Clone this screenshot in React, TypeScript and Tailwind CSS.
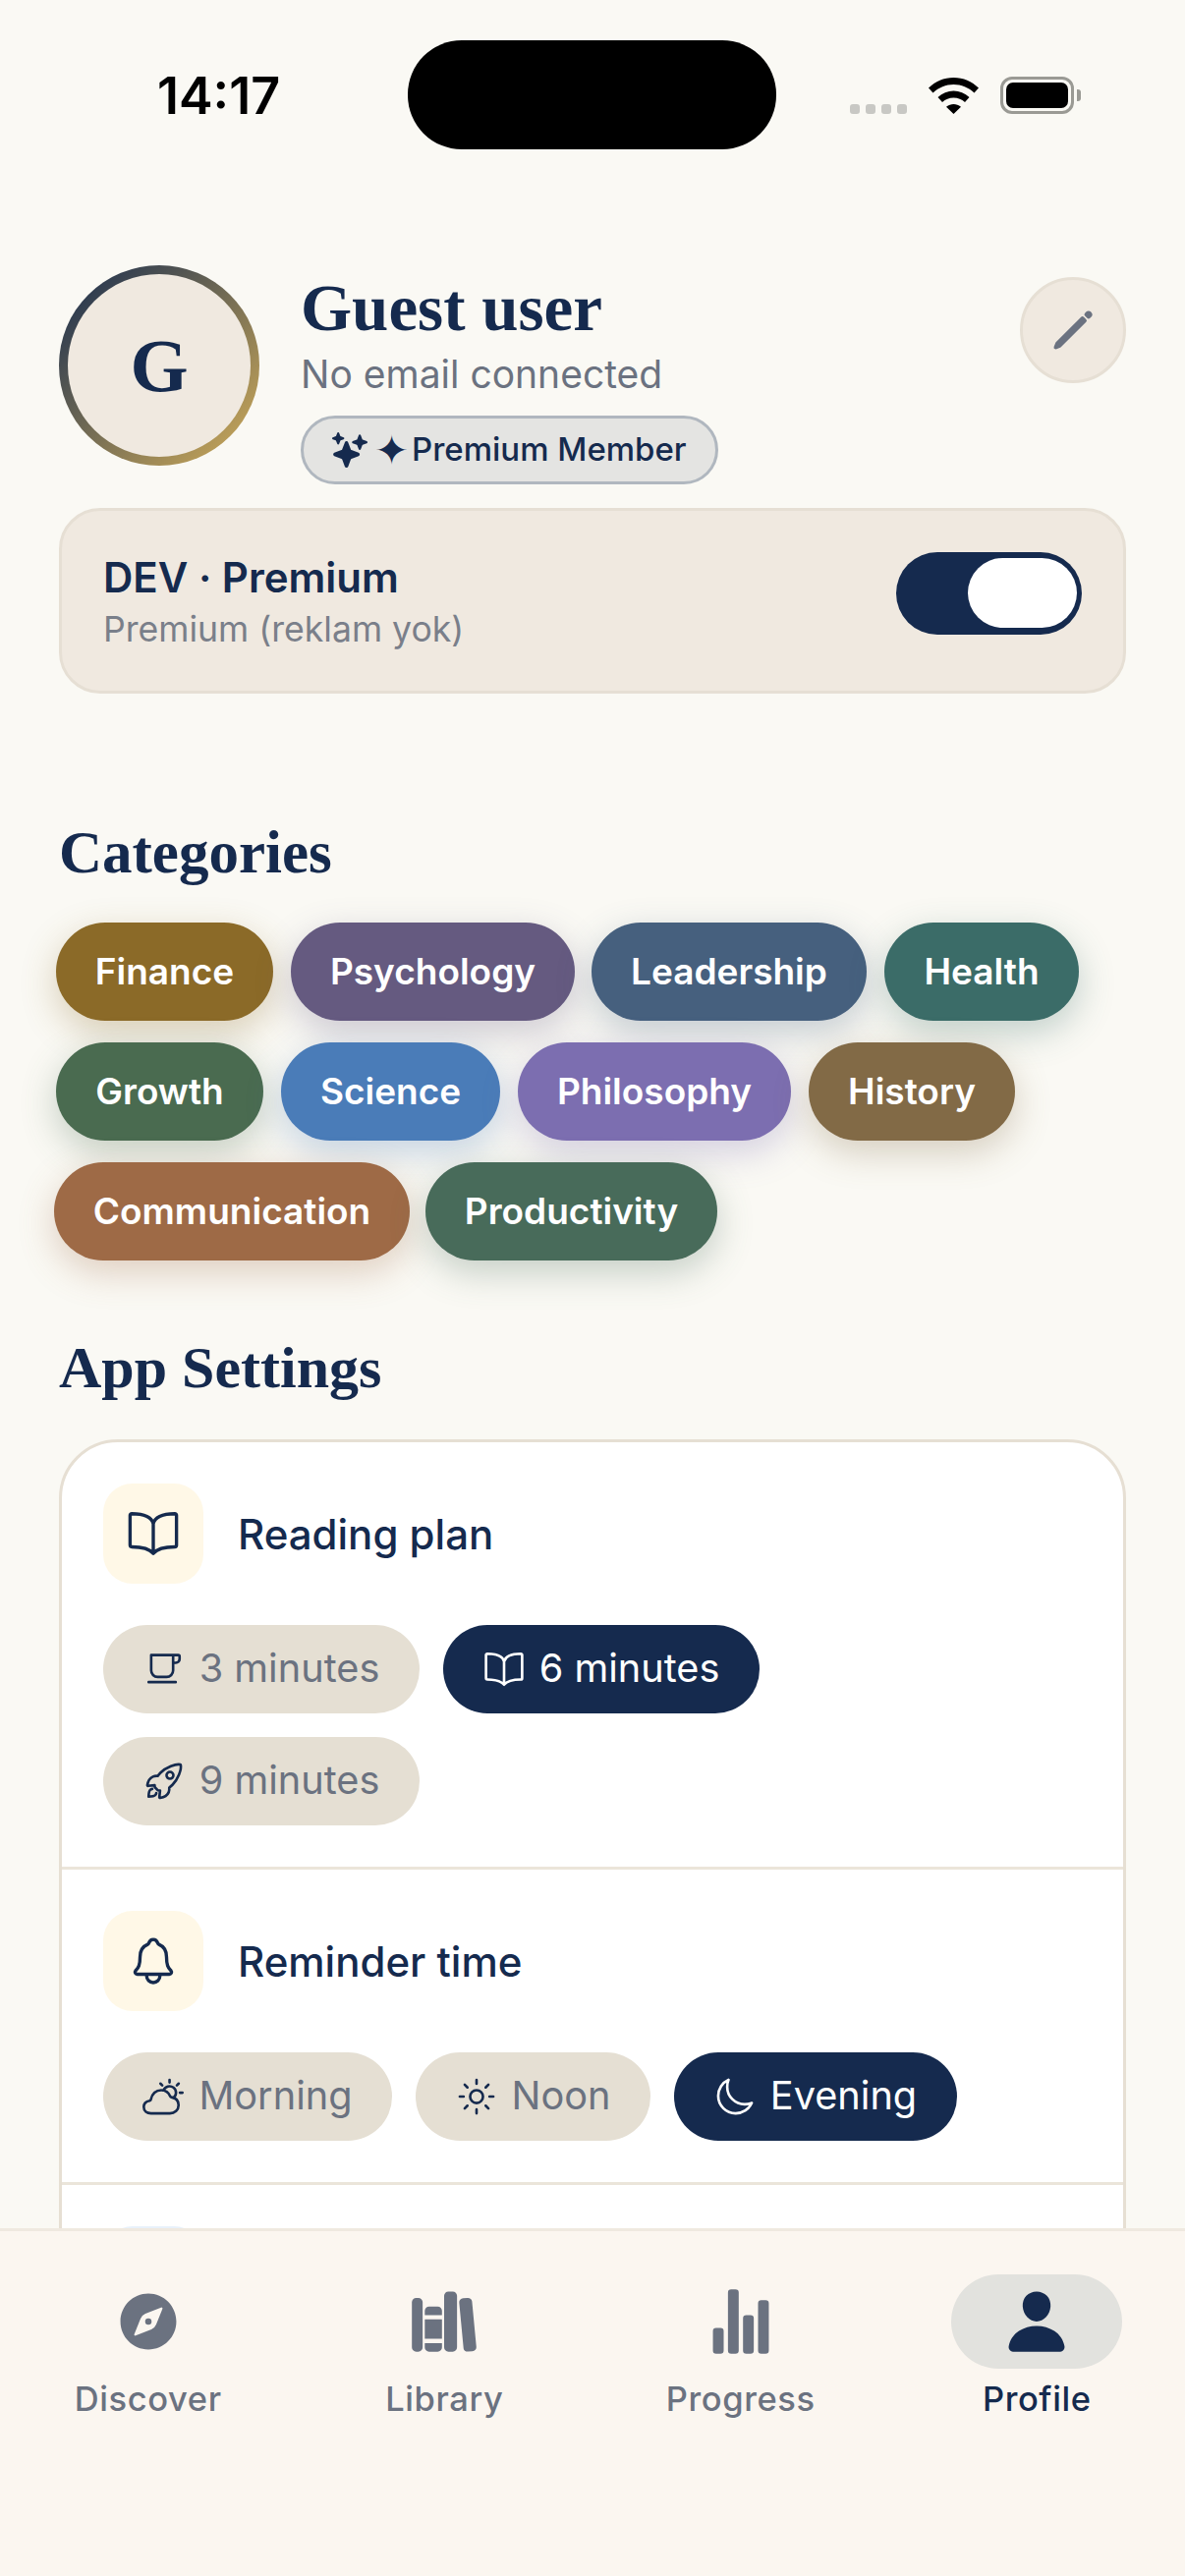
import { ReactNode } from "react"
import {
  IoBookOutline,
  IoCafeOutline,
  IoCompass,
  IoLibrary,
  IoMoonOutline,
  IoNotificationsOutline,
  IoPartlySunnyOutline,
  IoPencil,
  IoPerson,
  IoRocketOutline,
  IoSparkles,
  IoStatsChart,
  IoSunnyOutline,
} from "react-icons/io5"

const sans = "font-['Inter','Noto_Sans',sans-serif]"
const serif = "font-['Liberation_Serif','DejaVu_Serif',serif]"

const categories = [
  { label: "Finance", cls: "bg-[#8b6a28] shadow-[0_12px_36px_rgba(139,106,40,0.3)] w-[221px]" },
  { label: "Psychology", cls: "bg-[#655a80] shadow-[0_12px_36px_rgba(101,90,128,0.3)] w-[289px]" },
  { label: "Leadership", cls: "bg-[#46607e] shadow-[0_12px_36px_rgba(70,96,126,0.3)] w-[280px] -ml-[1px]" },
  { label: "Health", cls: "bg-[#3b6c68] shadow-[0_12px_36px_rgba(59,108,104,0.3)] w-[198px]" },
  { label: "Growth", cls: "bg-[#4a6b50] shadow-[0_12px_36px_rgba(74,107,80,0.3)] w-[211px]" },
  { label: "Science", cls: "bg-[#4a7cb8] shadow-[0_12px_36px_rgba(74,124,184,0.3)] w-[223px]" },
  { label: "Philosophy", cls: "bg-[#7c6eb0] shadow-[0_12px_36px_rgba(124,110,176,0.3)] w-[278px]" },
  { label: "History", cls: "bg-[#826a46] shadow-[0_12px_36px_rgba(130,106,70,0.3)] w-[210px]" },
  { label: "Communication", cls: "bg-[#9e6a46] shadow-[0_12px_36px_rgba(158,106,70,0.3)] w-[362px] -ml-[2px]" },
  { label: "Productivity", cls: "bg-[#486b5a] shadow-[0_12px_36px_rgba(72,107,90,0.3)] w-[297px] -ml-[2px]" },
]

function StatusBar() {
  return (
    <div className="flex h-[152px] shrink-0 items-start pt-[41px]">
      <span className={`${sans} ml-[160px] mt-[26px] w-[255px] text-[52px] leading-[62px] font-semibold text-black`}>
        14:17
      </span>
      <div className="h-[111px] w-[375px] rounded-[55px] bg-black" />
      <div className="ml-[75px] mt-[65px] flex gap-[6px]">
        <span className="h-[10px] w-[10px] rounded-[3px] bg-[#c8c8c4]" />
        <span className="h-[10px] w-[10px] rounded-[3px] bg-[#c8c8c4]" />
        <span className="h-[10px] w-[10px] rounded-[3px] bg-[#c8c8c4]" />
        <span className="h-[10px] w-[10px] rounded-[3px] bg-[#c8c8c4]" />
      </div>
      <svg className="ml-[22px] mt-[38px]" width="51" height="37" viewBox="0 0 51 37">
        <path d="M25.5 0C15.5 0 7 4 0 10.5L4.5 15.5C10.5 10 17.5 7 25.5 7S40.5 10 46.5 15.5L51 10.5C44 4 35.5 0 25.5 0Z" fill="#000" />
        <path d="M25.5 13.5C19.5 13.5 14 15.7 9.5 20L14 25C17.2 22 21 20.5 25.5 20.5S33.8 22 37 25L41.5 20C37 15.7 31.5 13.5 25.5 13.5Z" fill="#000" />
        <path d="M25.5 27C22.8 27 20.5 27.9 18 29.8L25.5 37L33 29.8C30.5 27.9 28.2 27 25.5 27Z" fill="#000" />
      </svg>
      <div className="ml-[22px] mt-[37px] flex items-center">
        <div className="h-[38px] w-[75px] rounded-[12px] border-[3px] border-[#9a9a94] p-[3px]">
          <div className="h-full w-full rounded-[7px] bg-black" />
        </div>
        <span className="ml-[3px] h-[12px] w-[4px] rounded-r-[3px] bg-[#9a9a94]" />
      </div>
    </div>
  )
}

function ProfileHeader() {
  return (
    <div className="flex items-start">
      <div className="h-[204px] w-[204px] shrink-0 rounded-full bg-[linear-gradient(135deg,#152a4e,#d4af5a)] p-[9px]">
        <div className={`${serif} flex h-full w-full items-center justify-center rounded-full bg-[#f0e9e0] text-[76px] leading-none font-bold text-[#152a4e]`}>
          G
        </div>
      </div>
      <div className="ml-[42px] flex flex-1 flex-col items-start">
        <div className={`${serif} text-[67px] leading-[86px] font-bold text-[#152a4e]`}>Guest user</div>
        <div className={`${sans} text-[39px] leading-[50px] text-[#6b7280]`}>No email connected</div>
        <div className={`${sans} mt-[17px] flex h-[70px] w-[425px] items-center rounded-full border-[3px] border-[#b0b7bf] bg-[#e4e4e2] pl-[29px] text-[33px] font-medium text-[#152a4e]`}>
          <IoSparkles size={36} />
          <span className="ml-[7px] flex items-center">
            <span className="text-[42px] leading-none">✦</span>
            <span className="ml-[3px]">Premium Member</span>
          </span>
        </div>
      </div>
      <div className="mt-[12px] flex h-[108px] w-[108px] shrink-0 items-center justify-center rounded-full border-[3px] border-[#e6dfd4] bg-[#f0e9e0] text-[#6b7280]">
        <IoPencil size={48} />
      </div>
    </div>
  )
}

function DevCard() {
  return (
    <div className="mt-[24px] flex h-[189px] items-center justify-between rounded-[42px] border-[3px] border-[#e6dfd4] bg-[#f0e9e0] pl-[42px] pr-[42px]">
      <div className={`${sans} pt-[3px]`}>
        <div className="text-[42px] leading-[54px] font-semibold text-[#152a4e]">DEV · Premium</div>
        <div className="mt-[2px] text-[35.6px] leading-[48px] text-[#7a7f8a]">Premium (reklam yok)</div>
      </div>
      <div className="mb-[16px] flex h-[84px] w-[189px] items-center justify-end rounded-full bg-[#152a4e] pr-[5px]">
        <div className="h-[71px] w-[111px] rounded-full bg-white" />
      </div>
    </div>
  )
}

function Chips() {
  return (
    <div className="-ml-[3px] mt-[35px] flex flex-wrap gap-x-[18px] gap-y-[22px]">
      {categories.map((c) => (
        <div
          key={c.label}
          className={`${sans} ${c.cls} flex h-[100px] items-center justify-center rounded-full text-[37px] font-semibold text-white`}
        >
          {c.label}
        </div>
      ))}
    </div>
  )
}

function Option({ icon, label, active, className }: { icon: ReactNode; label: string; active?: boolean; className: string }) {
  return (
    <div
      className={`${sans} ${className} flex h-[90px] items-center justify-center gap-[15px] rounded-full text-[39.7px] ${
        active ? "bg-[#152a4e] text-white" : "bg-[#e5dfd3] text-[#6b7280]"
      }`}
    >
      <span className={active ? "text-white" : "text-[#152a4e]"}>{icon}</span>
      {label}
    </div>
  )
}

function SettingRow({ icon, title, children }: { icon: ReactNode; title: string; children: ReactNode }) {
  return (
    <div className="border-b-[3px] border-[#ebe5da] px-[42px] py-[42px]">
      <div className="flex items-center gap-[35px]">
        <div className="flex h-[102px] w-[102px] items-center justify-center rounded-[30px] bg-[#fff8e7] text-[#152a4e]">
          {icon}
        </div>
        <span className={`${sans} text-[42px] font-medium text-[#152a4e]`}>{title}</span>
      </div>
      <div className="mt-[42px] flex flex-wrap gap-[24px]">{children}</div>
    </div>
  )
}

function Settings() {
  return (
    <div className="mt-[37px] rounded-[60px] border-[3px] border-[#e6dfd3] bg-white">
      <SettingRow icon={<IoBookOutline size={54} />} title="Reading plan">
        <Option className="w-[322px]" icon={<IoCafeOutline size={42} />} label="3 minutes" />
        <Option className="w-[322px]" icon={<IoBookOutline size={42} />} label="6 minutes" active />
        <Option className="w-[322px]" icon={<IoRocketOutline size={42} />} label="9 minutes" />
      </SettingRow>
      <SettingRow icon={<IoNotificationsOutline size={54} />} title="Reminder time">
        <Option className="w-[294px]" icon={<IoPartlySunnyOutline size={42} />} label="Morning" />
        <Option className="w-[239px]" icon={<IoSunnyOutline size={42} />} label="Noon" />
        <Option className="w-[288px]" icon={<IoMoonOutline size={42} />} label="Evening" active />
      </SettingRow>
      <div className="px-[42px] py-[42px]">
        <div className="h-[102px] w-[102px] rounded-[30px] bg-[#e8f1fa]" />
      </div>
    </div>
  )
}

function NavItem({ icon, label, active }: { icon: ReactNode; label: string; active?: boolean }) {
  return (
    <div className={`${sans} flex flex-1 flex-col items-center`}>
      <div className={`flex h-[96px] w-[174px] items-center justify-center rounded-[48px] ${active ? "bg-[#e2e2de] text-[#152a4e]" : "text-[#6b7280]"}`}>
        {icon}
      </div>
      <span className={`mt-[9px] text-[34.5px] leading-[44px] tracking-[0.6px] font-medium ${active ? "text-[#152a4e]" : "text-[#6b7280]"}`}>
        {label}
      </span>
    </div>
  )
}

export default function App() {
  return (
    <div className="flex h-[2622px] w-[1206px] flex-col overflow-hidden bg-[#faf9f4]">
      <StatusBar />
      <main className="min-h-0 flex-1 overflow-hidden px-[60px] pt-[118px]">
        <ProfileHeader />
        <DevCard />
        <h2 className={`${serif} mt-[126px] text-[61px] leading-[72px] font-bold text-[#152a4e]`}>Categories</h2>
        <Chips />
        <h2 className={`${serif} mt-[73px] text-[60px] leading-[72px] font-bold text-[#152a4e]`}>App Settings</h2>
        <Settings />
      </main>
      <nav className="flex h-[354px] shrink-0 border-t-[3px] border-[#efe9e0] bg-[#fbf6f0] pt-[44px]">
        <NavItem icon={<IoCompass size={70} />} label="Discover" />
        <NavItem icon={<IoLibrary size={70} />} label="Library" />
        <NavItem icon={<IoStatsChart size={70} />} label="Progress" />
        <NavItem icon={<IoPerson size={70} />} label="Profile" active />
      </nav>
    </div>
  )
}
